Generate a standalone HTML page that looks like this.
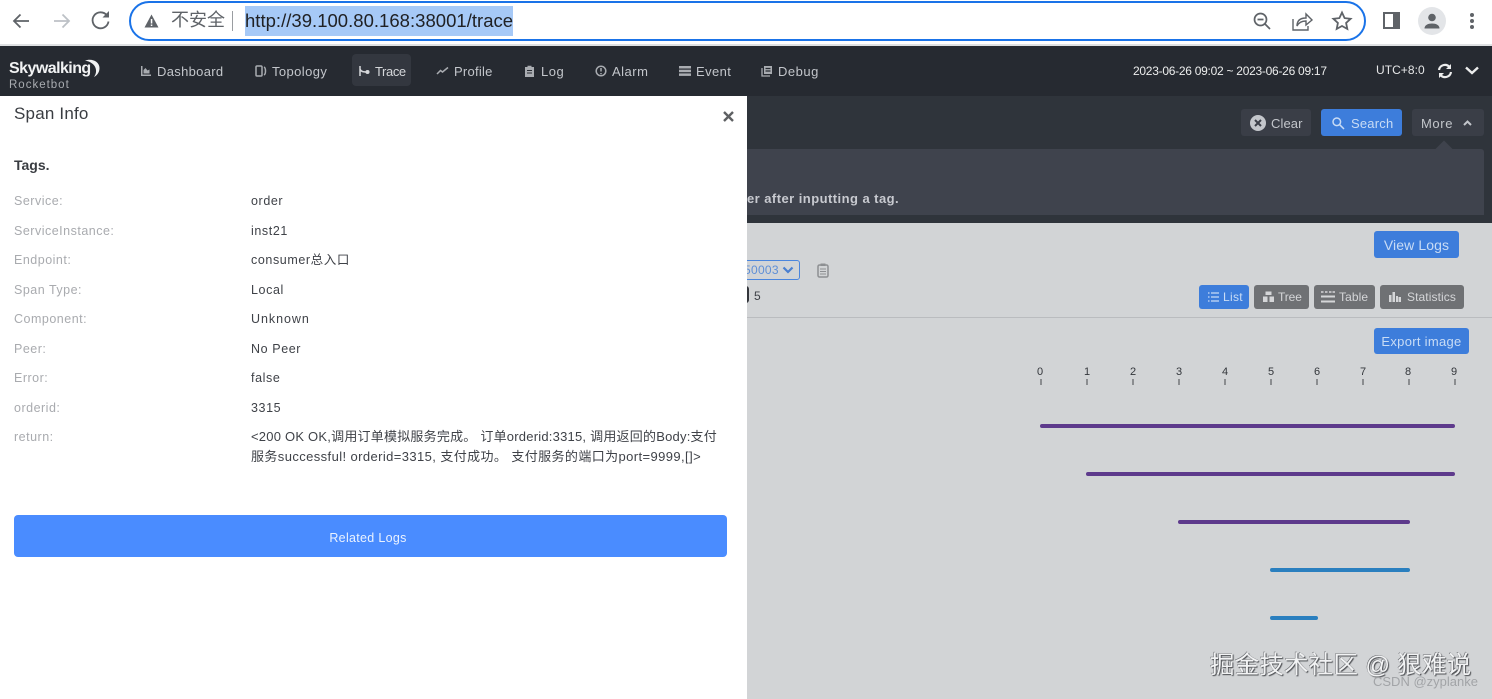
<!DOCTYPE html>
<html><head><meta charset="utf-8"><style>
*{box-sizing:border-box}
html,body{margin:0;padding:0}
body{width:1492px;height:699px;position:relative;overflow:hidden;background:#d2d4d6;font-family:"Liberation Sans","Noto Sans CJK SC",sans-serif}
.a{position:absolute}
.t{position:absolute;white-space:nowrap;line-height:16px;height:16px}
.n{font-size:13px;color:#c3c6cb;letter-spacing:.4px;top:64px}
.l{font-size:12.5px;color:#a9abaf;left:14px;letter-spacing:.5px;margin-top:1px}
.v{font-size:12.5px;color:#3f4248;left:251px;letter-spacing:.6px;margin-top:1px}
.btn{position:absolute;border-radius:3px;color:#fff;font-size:13px;display:flex;align-items:center;justify-content:center;white-space:nowrap;letter-spacing:.3px}
.b{background:#3d7ddb;color:#c9dcf5}
.g{background:#6f7174;color:#d5d6d8;font-size:12px;letter-spacing:.1px}
.d{background:#3a3e47;color:#c3c6cb}
.tk{position:absolute;top:379px;width:2px;height:6px;background:#8b8d90}
.tn{position:absolute;top:365px;width:14px;text-align:center;font-size:11px;line-height:14px;color:#33363b}
.bar{position:absolute;height:4px;border-radius:2px}
svg{position:absolute;overflow:visible}
</style></head><body>
<!-- browser bar -->
<div class="a" style="left:0;top:0;width:1492px;height:44px;background:#fff"></div>
<div class="a" style="left:0;top:44px;width:1492px;height:2px;background:#dfe1e3"></div>
<svg style="left:0;top:0" width="120" height="44" fill="none" stroke-width="1.800">
<path d="M29 21H14M20.500 14.500L14 21l6.500 6.500" stroke="#5f6368"/>
<path d="M54 21h15M62.500 14.500L69 21l-6.500 6.500" stroke="#bdc1c6"/>
<path d="M107 15.500a8 8 0 1 0 1.500 6" stroke="#5f6368"/>
<path d="M109 11v6.500h-6.500z" fill="#5f6368" stroke="none"/>
</svg>
<div class="a" style="left:129px;top:1px;width:1237px;height:40px;border:2.500px solid #1a73e8;border-radius:20px;background:#fff"></div>
<svg style="left:144px;top:14px" width="15" height="14"><path d="M7.500 0.500L14.500 13.500H0.500z" fill="#5f6368"/><rect x="6.800" y="5" width="1.500" height="4.500" fill="#fff"/><rect x="6.800" y="10.500" width="1.500" height="1.500" fill="#fff"/></svg>
<div class="t" style="left:171px;top:10px;line-height:20px;height:20px;font-size:18px;color:#5f6368">不安全</div>
<div class="a" style="left:232px;top:11px;width:1px;height:20px;background:#9a9da1"></div>
<div class="a" style="left:245px;top:6px;width:268px;height:30px;background:#a6c9f7"></div>
<div class="t" style="left:245px;top:10px;line-height:22px;height:22px;font-size:18.500px;color:#202124;letter-spacing:.02px">http://39.100.80.168:38001/trace</div>
<svg style="left:1253px;top:12px" width="18" height="18" fill="none" stroke="#5f6368" stroke-width="1.700"><circle cx="7.500" cy="7.500" r="6"/><path d="M12 12l5 5M4.500 7.500h6"/></svg>
<svg style="left:1292px;top:11px" width="22" height="20" fill="none" stroke="#5f6368" stroke-width="1.400"><path d="M1 8v11h15v-4"/><path d="M5 15c0-6 4-8 9-8V3l6 6-6 5v-4c-4 0-7 1-9 5z"/></svg>
<svg style="left:1332px;top:11px" width="20" height="20" fill="none" stroke="#5f6368" stroke-width="1.800"><path d="M10 1.500l2.600 5.600 6 .7-4.500 4.100 1.200 6L10 15l-5.300 2.900 1.200-6L1.400 7.800l6-.7z"/></svg>
<div class="a" style="left:1383px;top:12px;width:17px;height:17px;border:2px solid #5f6368;border-right-width:7px;background:#fff"></div>
<div class="a" style="left:1418px;top:7px;width:28px;height:28px;border-radius:50%;background:#e3e5e8"></div>
<svg style="left:1423px;top:13px" width="18" height="16" fill="#5f6368"><circle cx="9" cy="4.500" r="3.800"/><path d="M1.500 15.500c0-3.500 3.500-5 7.500-5s7.500 1.500 7.500 5z"/></svg>
<div class="a" style="left:1470px;top:13px;width:4px;height:4px;border-radius:50%;background:#5f6368"></div>
<div class="a" style="left:1470px;top:19px;width:4px;height:4px;border-radius:50%;background:#5f6368"></div>
<div class="a" style="left:1470px;top:25px;width:4px;height:4px;border-radius:50%;background:#5f6368"></div>

<!-- nav -->
<div class="a" style="left:0;top:46px;width:1492px;height:50px;background:#262a31"></div>
<div class="t" style="left:9px;top:60px;font-size:16px;font-weight:bold;color:#f1f2f3;letter-spacing:-.55px;line-height:18px;height:18px">Skywalking</div>
<svg style="left:84px;top:58px" width="16" height="20" fill="#f1f2f3"><path d="M1 2.500c7-2.500 14.500 1 14.500 7.500 0 4-2 7-5.500 9 2-3 2.500-5.500 1.700-8.500C10.500 6 6 3.500 1 2.500z"/></svg>
<div class="t" style="left:9px;top:77px;font-size:11.500px;color:#a9acb1;letter-spacing:1px">Rocketbot</div>
<div class="a" style="left:352px;top:54px;width:59px;height:32px;background:#33373f;border-radius:4px"></div>
<svg style="left:140px;top:65px" width="12" height="12" fill="#a9acb1"><path d="M1 1h1.500v8.500H11V11H1z"/><path d="M3.500 8.500V5l2-2 2 2.500 2-1v4z"/></svg>
<div class="t n" style="left:157px;letter-spacing:.32px">Dashboard</div>
<svg style="left:255px;top:65px" width="12" height="12" fill="none" stroke="#a9acb1" stroke-width="1.500"><rect x="1" y="1" width="6" height="10" rx="1"/><path d="M9 2c2 1 2 7 0 8"/></svg>
<div class="t n" style="left:272px">Topology</div>
<svg style="left:358px;top:65px" width="12" height="12" fill="none" stroke="#d5d7da" stroke-width="1.500"><path d="M2 1v10M2 4c1 3 4 3 7 3"/><circle cx="9.500" cy="7" r="1.300" fill="#d5d7da"/></svg>
<div class="t n" style="left:375px;color:#d5d7da;letter-spacing:-.4px">Trace</div>
<svg style="left:436px;top:65px" width="13" height="12" fill="none" stroke="#a9acb1" stroke-width="1.500"><path d="M1 9l3.500-3.500 2 1.500L12 2.500"/></svg>
<div class="t n" style="left:454px;letter-spacing:.25px">Profile</div>
<svg style="left:524px;top:65px" width="11" height="12" fill="#a9acb1"><path d="M1 2h2.500V.8h4V2H10v10H1z"/><path d="M3 5.500h5M3 8h5" stroke="#262a31"/></svg>
<div class="t n" style="left:541px;letter-spacing:.55px">Log</div>
<svg style="left:595px;top:65px" width="12" height="12" fill="none" stroke="#a9acb1" stroke-width="1.500"><circle cx="6" cy="6" r="4.800"/><path d="M6 3v3.500M6 8v1.200"/></svg>
<div class="t n" style="left:612px;letter-spacing:.5px">Alarm</div>
<svg style="left:679px;top:65px" width="12" height="12" fill="#a9acb1"><rect y="1" width="12" height="2.500"/><rect y="4.700" width="12" height="2.500"/><rect y="8.400" width="12" height="2.500"/></svg>
<div class="t n" style="left:696px;letter-spacing:.4px">Event</div>
<svg style="left:761px;top:65px" width="12" height="12" fill="none" stroke="#a9acb1" stroke-width="1.300"><path d="M1 3v8h8"/><rect x="3" y="1" width="8" height="8" fill="#a9acb1" stroke="none"/><path d="M4.500 3.500h5M4.500 6h5" stroke="#262a31"/></svg>
<div class="t n" style="left:778px;letter-spacing:.5px">Debug</div>
<div class="t" style="left:1133px;top:63px;font-size:12px;color:#eceded;letter-spacing:-.27px">2023-06-26 09:02 ~ 2023-06-26 09:17</div>
<div class="t" style="left:1376px;top:62px;font-size:12px;color:#e6e7e8;letter-spacing:.05px">UTC+8:0</div>
<svg style="left:1437px;top:63px" width="16" height="16" fill="none" stroke="#eceded" stroke-width="2.200"><path d="M2 7a6 6 0 0 1 10.500-3M14 9a6 6 0 0 1-10.500 3"/><path d="M14 1v5h-5zM2 15v-5h5z" fill="#eceded" stroke="none"/></svg>
<svg style="left:1465px;top:66px" width="14" height="9" fill="none" stroke="#eceded" stroke-width="2.400"><path d="M1 1.500l6 5.500 6-5.500"/></svg>

<!-- dark sub-bar -->
<div class="a" style="left:747px;top:96px;width:745px;height:127px;background:#2f343b"></div>
<div class="a" style="left:747px;top:149px;width:737px;height:66px;background:#3f434d;border-radius:0 3px 0 0"></div>
<div class="a" style="left:1438px;top:143px;width:12px;height:12px;background:#3f434d;transform:rotate(45deg)"></div>
<div class="t" style="left:747px;top:191px;font-size:13px;font-weight:bold;color:#c8cad0;letter-spacing:.45px">er after inputting a tag.</div>
<div class="btn d" style="left:1241px;top:109px;width:70px;height:27px;justify-content:flex-start;padding:2px 0 0 30px;letter-spacing:.1px">Clear</div>
<svg style="left:1250px;top:115px" width="16" height="16"><circle cx="8" cy="8" r="8" fill="#c3c6cb"/><path d="M5 5l6 6M11 5l-6 6" stroke="#3a3e47" stroke-width="2"/></svg>
<div class="btn b" style="left:1321px;top:109px;width:81px;height:27px;justify-content:flex-start;padding:2px 0 0 30px;letter-spacing:.2px">Search</div>
<svg style="left:1332px;top:117px" width="12" height="12" fill="none" stroke="#c9dcf5" stroke-width="1.500"><circle cx="4.800" cy="4.800" r="3.800"/><path d="M7.800 7.800L12 12"/></svg>
<div class="btn d" style="left:1412px;top:109px;width:72px;height:27px;justify-content:flex-start;padding:2px 0 0 9px;letter-spacing:.6px">More</div>
<svg style="left:1463px;top:120px" width="9" height="6" fill="none" stroke="#c3c6cb" stroke-width="2"><path d="M1 5l3.500-3.500L8 5"/></svg>

<!-- body -->
<div class="btn b" style="left:1374px;top:231px;width:85px;height:27px;font-size:14px;border-radius:3px;letter-spacing:.1px">View Logs</div>
<div class="a" style="left:730px;top:260px;width:70px;height:20px;border:1px solid #4a85dd;border-radius:3px"></div>
<div class="t" style="left:744px;top:262px;font-size:12px;color:#5f8fd6;letter-spacing:.3px;clip-path:inset(0 0 0 3px)">50003</div>
<svg style="left:782px;top:266px" width="12" height="8" fill="none" stroke="#4a7fd0" stroke-width="2.200"><path d="M1.500 1.500L6 6l4.500-4.500"/></svg>
<svg style="left:817px;top:263px" width="12" height="15" fill="none" stroke="#8d8f92" stroke-width="1.500"><rect x="1" y="2" width="10" height="12" rx="1.500"/><path d="M3 6h6M3 8.500h6M3 11h6" stroke-width="1"/><rect x="3.500" y="0.500" width="5" height="2.500" fill="#8d8f92" stroke="none"/></svg>
<div class="a" style="left:740px;top:286px;width:9px;height:17px;background:#33363b;border-radius:3px"></div>
<div class="t" style="left:754px;top:288px;font-size:12px;color:#3f4248">5</div>
<div class="btn b" style="left:1199px;top:285px;width:50px;height:24px;font-size:12px;justify-content:flex-start;padding-left:24px;letter-spacing:.3px">List</div>
<svg style="left:1208px;top:291px" width="11" height="12" stroke="#c9dcf5" stroke-width="1.300"><path d="M3 2h8M3 6h8M3 10h8M0 2h1.500M0 6h1.500M0 10h1.500"/></svg>
<div class="btn g" style="left:1254px;top:285px;width:55px;height:24px;justify-content:flex-start;padding-left:24px;letter-spacing:-.1px">Tree</div>
<svg style="left:1263px;top:291px" width="11" height="12" fill="#d5d6d8"><rect x="2.500" y="0.500" width="6" height="3.500"/><rect y="5.500" width="4.500" height="5.500"/><rect x="6.500" y="5.500" width="4.500" height="5.500"/></svg>
<div class="btn g" style="left:1314px;top:285px;width:61px;height:24px;justify-content:flex-start;padding-left:25px">Table</div>
<svg style="left:1321px;top:290px" width="14" height="14" stroke="#d5d6d8" stroke-width="1.500"><path d="M0 2h2.500M4 2h2.500M8 2h2.500M11.500 2h2.500" /><path d="M0 6.500h14M0 11.500h14" stroke-width="2"/></svg>
<div class="btn g" style="left:1380px;top:285px;width:84px;height:24px;justify-content:flex-start;padding-left:27px;letter-spacing:.1px">Statistics</div>
<svg style="left:1389px;top:291px" width="12" height="12" fill="#d5d6d8"><rect y="4" width="2.500" height="7"/><rect x="3.500" y="1" width="2.500" height="10"/><rect x="7" y="5" width="2" height="6"/><rect x="9.500" y="6" width="2.500" height="5"/></svg>
<div class="a" style="left:747px;top:317px;width:745px;height:1px;background:#babcbf"></div>
<div class="btn b" style="left:1374px;top:328px;width:95px;height:26px;font-size:13px">Export image</div>

<div class="tn" style="left:1033px">0</div><div class="tk" style="left:1040px"></div>
<div class="tn" style="left:1080px">1</div><div class="tk" style="left:1086px"></div>
<div class="tn" style="left:1126px">2</div><div class="tk" style="left:1132px"></div>
<div class="tn" style="left:1172px">3</div><div class="tk" style="left:1178px"></div>
<div class="tn" style="left:1218px">4</div><div class="tk" style="left:1224px"></div>
<div class="tn" style="left:1264px">5</div><div class="tk" style="left:1270px"></div>
<div class="tn" style="left:1310px">6</div><div class="tk" style="left:1316px"></div>
<div class="tn" style="left:1356px">7</div><div class="tk" style="left:1362px"></div>
<div class="tn" style="left:1401px">8</div><div class="tk" style="left:1408px"></div>
<div class="tn" style="left:1447px">9</div><div class="tk" style="left:1454px"></div>

<div class="bar" style="left:1040px;top:424px;width:415px;background:#5e3a8c"></div>
<div class="bar" style="left:1086px;top:472px;width:369px;background:#5e3a8c"></div>
<div class="bar" style="left:1178px;top:520px;width:232px;background:#5e3a8c"></div>
<div class="bar" style="left:1270px;top:568px;width:140px;background:#2a7fbf"></div>
<div class="bar" style="left:1270px;top:616px;width:48px;background:#2a7fbf"></div>

<!-- watermark -->
<div class="t" style="left:1210px;top:652px;height:28px;line-height:28px;font-size:24.500px;color:#f2f3f4;text-shadow:1px 1px 1px #4a4c50,-.5px -.5px 0 #6a6c70;letter-spacing:.2px">掘金技术社区 @ 狠难说</div>
<div class="t" style="left:1373px;top:674px;font-size:13px;color:#a2a4a7;letter-spacing:0">CSDN @zyplanke</div>

<!-- drawer -->
<div class="a" style="left:0;top:96px;width:747px;height:603px;background:#fff"></div>
<div class="t" style="left:14px;top:104px;height:20px;line-height:20px;font-size:17px;color:#3a3d42;letter-spacing:.2px">Span Info</div>
<svg style="left:723px;top:111px" width="11" height="11" stroke="#5e6063" stroke-width="2.400"><path d="M1 1l9 9M10 1l-9 9"/></svg>
<div class="t" style="left:14px;top:157px;font-size:14px;font-weight:bold;color:#3a3d42">Tags.</div>
<div class="t l" style="top:192px">Service:</div><div class="t v" style="top:192px">order</div>
<div class="t l" style="top:222px">ServiceInstance:</div><div class="t v" style="top:222px">inst21</div>
<div class="t l" style="top:251px">Endpoint:</div><div class="t v" style="top:251px">consumer总入口</div>
<div class="t l" style="top:281px">Span Type:</div><div class="t v" style="top:281px">Local</div>
<div class="t l" style="top:310px">Component:</div><div class="t v" style="top:310px;letter-spacing:.95px">Unknown</div>
<div class="t l" style="top:340px">Peer:</div><div class="t v" style="top:340px">No Peer</div>
<div class="t l" style="top:369px">Error:</div><div class="t v" style="top:369px">false</div>
<div class="t l" style="top:399px">orderid:</div><div class="t v" style="top:399px">3315</div>
<div class="t l" style="top:428px">return:</div>
<div class="t v" style="top:428px;font-size:13px;letter-spacing:.22px">&lt;200 OK OK,调用订单模拟服务完成。 订单orderid:3315, 调用返回的Body:支付</div>
<div class="t v" style="top:448px;font-size:13px;letter-spacing:.4px">服务successful! orderid=3315, 支付成功。 支付服务的端口为port=9999,[]&gt;</div>
<div class="btn" style="left:14px;top:515px;width:713px;height:42px;padding:3px 5px 0 0;background:#4a8cff;border-radius:4px;font-size:12.500px;color:#eaf2ff;letter-spacing:.3px">Related Logs</div>
</body></html>
